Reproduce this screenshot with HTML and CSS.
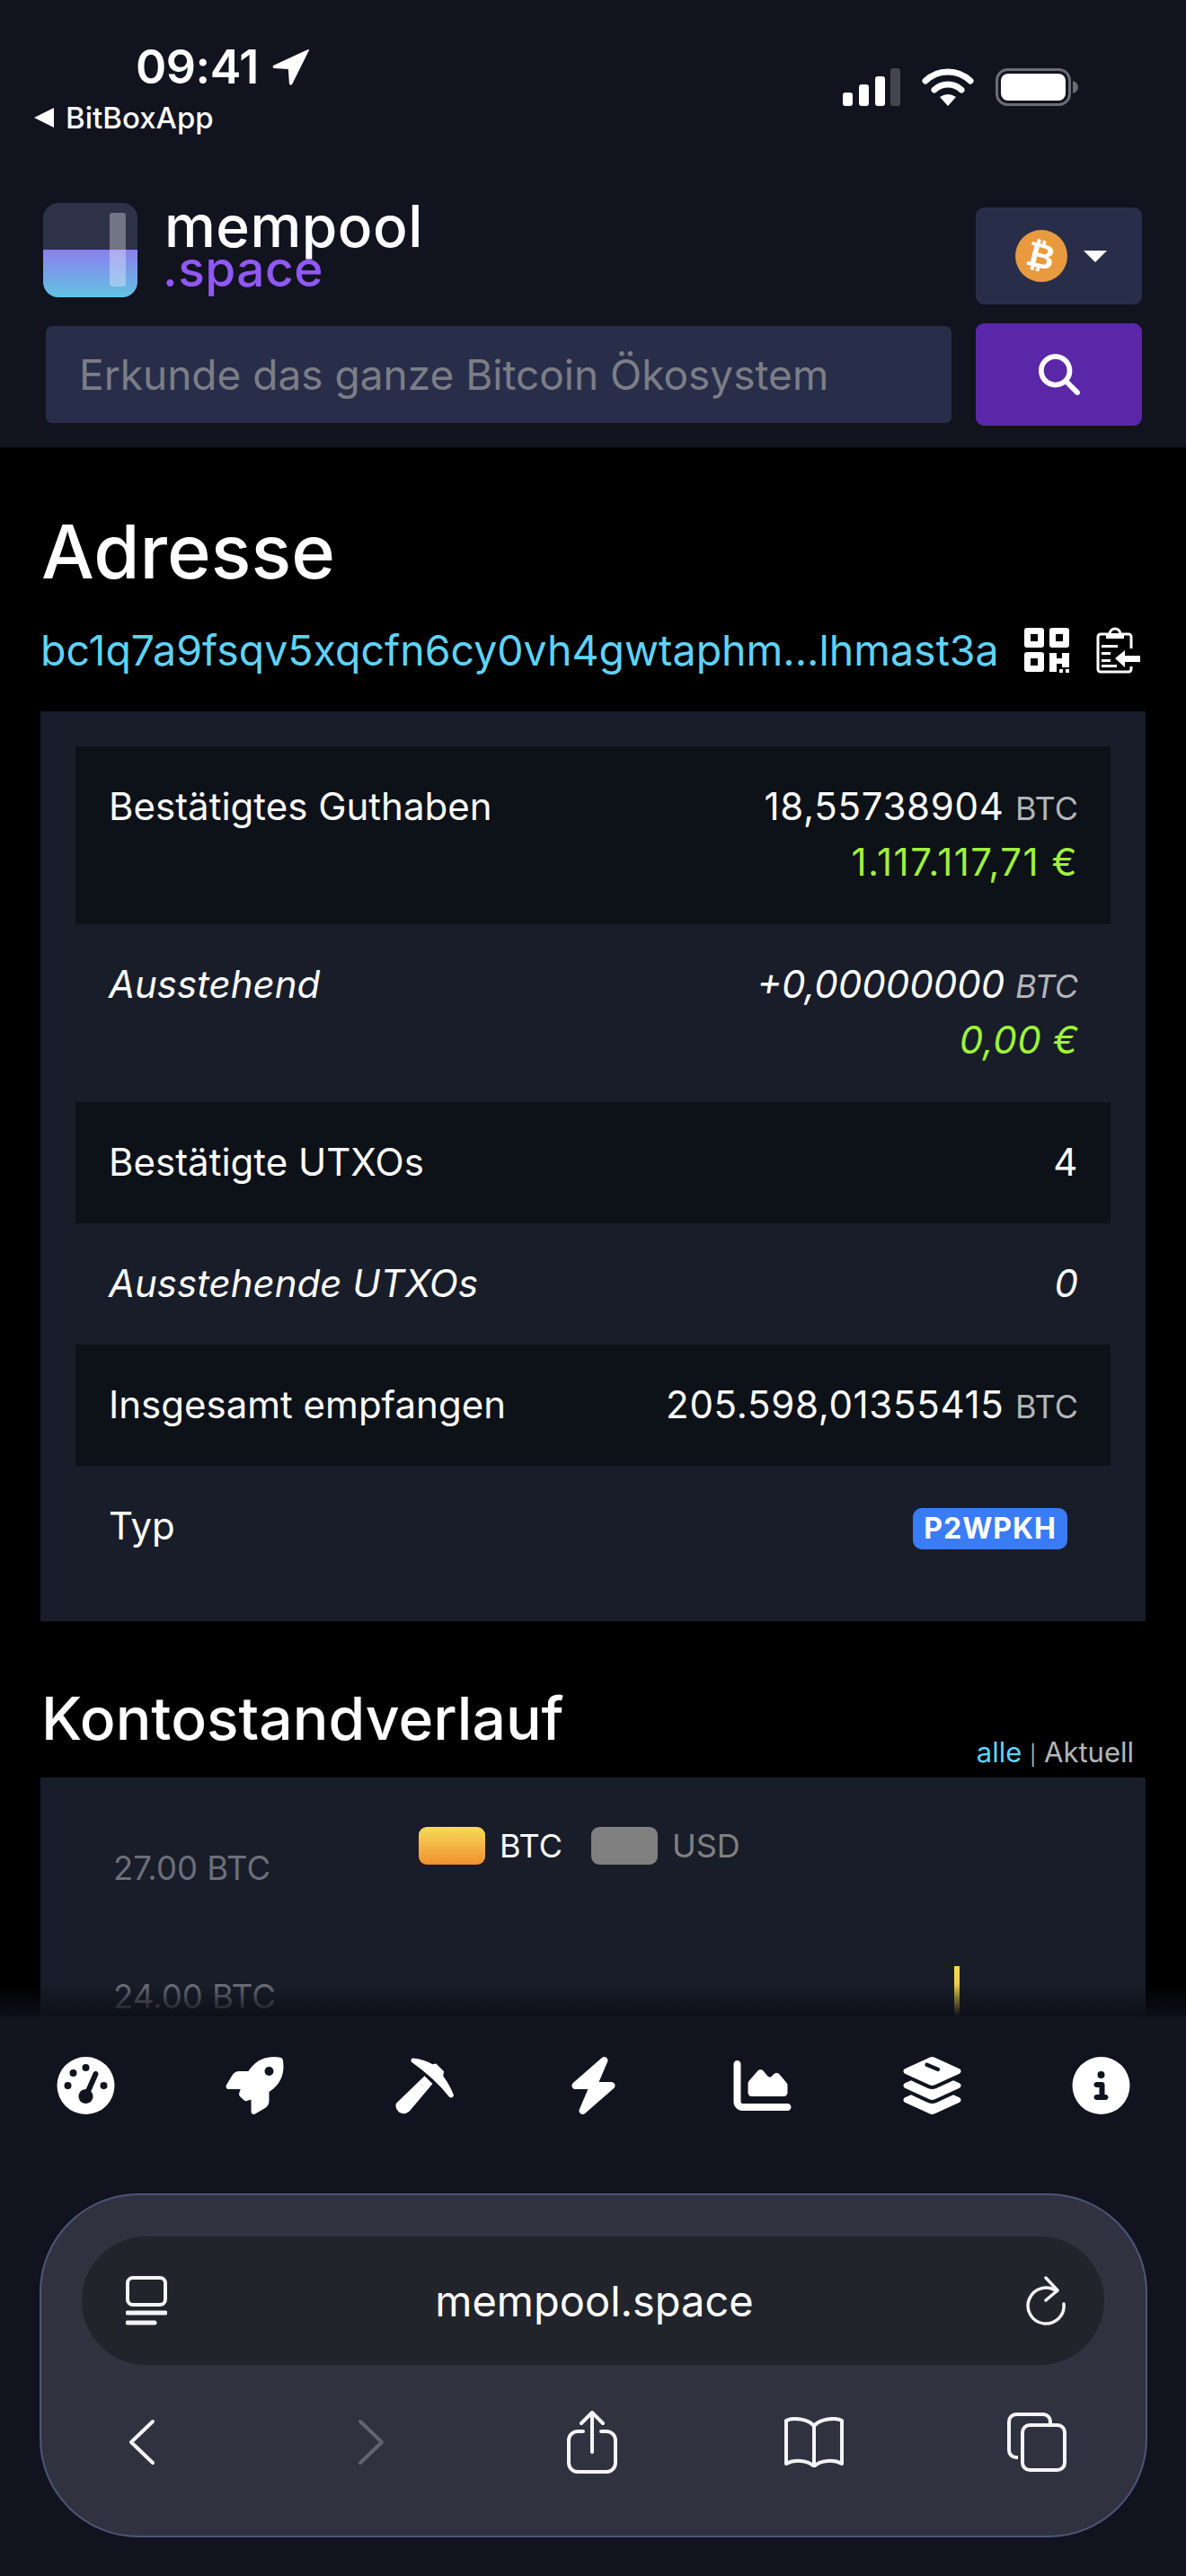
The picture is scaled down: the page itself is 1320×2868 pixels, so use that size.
FILE: index.html
```html
<!DOCTYPE html>
<html lang="de">
  <head>
    <meta charset="UTF-8" />
    <meta name="viewport" content="width=device-width, initial-scale=1.0" />
    <title>mempool.space</title>
    <link rel="stylesheet" href="styles.css">
  </head>

  <body>
    <div class="phone">
      <header class="header">
        <div class="status">
          <div class="status-left">
            <div class="time">
              09:41
              <svg class="arrow" viewBox="0 0 40 40"><path d="M38 1 1 18c-1 1 0 3 1 3l15 1 1 15c0 2 2 2 3 1L39 2c0-1 0-1-1-1z" fill="#fff" /></svg>
            </div>
            <div class="back-app"><span class="back-tri"></span>BitBoxApp</div>
          </div>
          <div class="status-right">
            <svg class="signal" viewBox="0 0 64 42">
              <rect x="0" y="27" width="11" height="15" rx="3" fill="#fff" />
              <rect x="18" y="18" width="11" height="24" rx="3" fill="#fff" />
              <rect x="36" y="9" width="11" height="33" rx="3" fill="#fff" />
              <rect x="53" y="0" width="11" height="42" rx="3" fill="#44464f" />
            </svg>
            <svg class="wifi" viewBox="0 0 58 42">
              <path d="M4 14A36 36 0 0 1 54 14" fill="none" stroke="#fff" stroke-width="7" stroke-linecap="round" />
              <path d="M14 24A22 22 0 0 1 44 24" fill="none" stroke="#fff" stroke-width="7" stroke-linecap="round" />
              <path d="M29 42 20 32Q29 26 38 32Z" fill="#fff" />
            </svg>
            <svg class="battery" viewBox="0 0 92 42">
              <rect x="1.500" y="1.500" width="81" height="39" rx="12" fill="none" stroke="#6a6c76" stroke-width="3" />
              <rect x="6" y="6" width="72" height="30" rx="8" fill="#fff" />
              <path d="M86 14q6 2 6 7t-6 7z" fill="#6a6c76" />
            </svg>
          </div>
        </div>

        <div class="brand-row">
          <div class="brand">
            <div class="logo-mark"><span class="logo-bar"></span></div>
            <div class="logo-text">
              <div class="logo-main">mempool</div>
              <div class="logo-sub">.space</div>
            </div>
          </div>
          <div class="net-btn">
            <span class="btc-coin"><span class="btc-sign">₿</span></span>
            <span class="caret"></span>
          </div>
        </div>

        <div class="search-row">
          <div class="search-input">Erkunde das ganze Bitcoin Ökosystem</div>
          <div class="search-btn">
            <svg viewBox="0 0 512 512"><path d="M416 208c0 45.900-14.900 88.300-40 122.700L502.600 457.400c12.500 12.500 12.500 32.800 0 45.300s-32.800 12.500-45.300 0L330.700 376c-34.400 25.200-76.800 40-122.700 40C93.100 416 0 322.900 0 208S93.100 0 208 0S416 93.100 416 208zM208 352a144 144 0 1 0 0-288 144 144 0 1 0 0 288z" fill="#fff" /></svg>
          </div>
        </div>
      </header>

      <main class="main">
        <h1 class="page-title">Adresse</h1>
        <div class="address-row">
          <span class="address">bc1q7a9fsqv5xqcfn6cy0vh4gwtaphm...lhmast3a</span>
          <svg class="addr-icon qr" viewBox="0 0 50 50">
            <path fill-rule="evenodd" d="M3 0h16q3 0 3 3v16q0 3-3 3H3q-3 0-3-3V3q0-3 3-3zm4 7v8h8V7zM31 0h16q3 0 3 3v16q0 3-3 3H31q-3 0-3-3V3q0-3 3-3zm4 7v8h8V7zM3 27h16q3 0 3 3v16q0 3-3 3H3q-3 0-3-3V30q0-3 3-3zm4 7v8h8v-8z" fill="#fff" />
            <path d="M28 28h8v6h6v-6h8v16h-8v-4h-6v9h-8z" fill="#fff" />
            <rect x="39" y="46" width="4" height="4" fill="#fff" />
            <rect x="46" y="46" width="4" height="4" fill="#fff" />
          </svg>
          <svg class="addr-icon clip" viewBox="0 0 50 52">
            <path d="M39 24V11a3 3 0 0 0-3-3H27a6 6 0 0 0-12 0H5a3 3 0 0 0-3 3v36a3 3 0 0 0 3 3h31a3 3 0 0 0 3-3V44" fill="none" stroke="#fff" stroke-width="3" />
            <path d="M11 7h20v6H11zM6 20h18v3H6zM6 28h10v3H6zM6 36h10v3H6zM6 42h17v3H6z" fill="#fff" />
            <path d="M21 35l11-9v6h17v7H32v6z" fill="#fff" />
          </svg>
        </div>

        <section class="card">
          <div class="row row-dark row-tall">
            <div class="row-label">Bestätigtes Guthaben</div>
            <div class="row-value">
              <div>18,55738904 <span class="unit">BTC</span></div>
              <div class="fiat">1.117.117,71 €</div>
            </div>
          </div>
          <div class="row row-tall row-pending">
            <div class="row-label">Ausstehend</div>
            <div class="row-value">
              <div>+0,00000000 <span class="unit">BTC</span></div>
              <div class="fiat">0,00 €</div>
            </div>
          </div>
          <div class="row row-dark">
            <div class="row-label">Bestätigte UTXOs</div>
            <div class="row-value">4</div>
          </div>
          <div class="row row-pending">
            <div class="row-label">Ausstehende UTXOs</div>
            <div class="row-value">0</div>
          </div>
          <div class="row row-dark">
            <div class="row-label">Insgesamt empfangen</div>
            <div class="row-value">205.598,01355415 <span class="unit">BTC</span></div>
          </div>
          <div class="row">
            <div class="row-label">Typ</div>
            <div class="row-value"><span class="badge">P2WPKH</span></div>
          </div>
        </section>

        <div class="history-head">
          <h2 class="section-title">Kontostandverlauf</h2>
          <div class="range"><span class="range-on">alle</span> <span class="range-sep">|</span> Aktuell</div>
        </div>

        <section class="chart">
          <div class="legend">
            <span class="swatch swatch-btc"></span><span class="legend-on">BTC</span>
            <span class="swatch swatch-usd"></span><span class="legend-off">USD</span>
          </div>
          <div class="axis">
            <div>27.00 BTC</div>
            <div>24.00 BTC</div>
          </div>
          <span class="chart-bar"></span>
        </section>
        <div class="fade"></div>
      </main>

      <nav class="icon-nav">
        <svg class="nav-icon" viewBox="0 0 512 512"><path d="M0 256a256 256 0 1 1 512 0A256 256 0 1 1 0 256zM288 96a32 32 0 1 0 -64 0 32 32 0 1 0 64 0zM256 416c35.300 0 64-28.700 64-64c0-17.400-6.900-33.100-18.100-44.600L366 161.700c5.300-12.100-.2-26.300-12.300-31.600s-26.300 .2-31.600 12.300L257.900 288c-.6 0-1.300 0-1.900 0c-35.300 0-64 28.700-64 64s28.700 64 64 64zM176 144a32 32 0 1 0 -64 0 32 32 0 1 0 64 0zM96 288a32 32 0 1 0 0-64 32 32 0 1 0 0 64zm352-32a32 32 0 1 0 -64 0 32 32 0 1 0 64 0z" /></svg>
        <svg class="nav-icon" viewBox="0 0 512 512"><path d="M156.600 384.900L125.700 354c-8.500-8.500-11.500-20.800-7.700-32.200c3-8.900 7-20.500 11.800-33.800L24 288c-8.600 0-16.600-4.600-20.900-12.100s-4.200-16.700 .2-24.100l52.500-88.500c13-21.900 36.500-35.300 62-35.300l82.300 0c2.400-4 4.800-7.700 7.200-11.300C289.100-4.100 411.100-8.100 483.900 5.300c11.600 2.100 20.600 11.200 22.800 22.800c13.400 72.900 9.300 194.800-111.400 276.700c-3.500 2.400-7.300 4.800-11.300 7.200v82.300c0 25.500-13.400 49-35.300 61.900l-88.500 52.500c-7.400 4.400-16.600 4.500-24.100 .2s-12.100-12.200-12.100-20.900V380.800c-14.100 4.900-26.400 8.900-35.700 11.900c-11.200 3.600-23.400 .5-31.800-7.800zM384 168a40 40 0 1 0 0-80 40 40 0 1 0 0 80z" /></svg>
        <svg class="nav-icon" viewBox="0 0 66 64"><path d="M1 52 33 21l9 9-26 31q-6 5-12 1-5-5-3-10zM20 1q12 1 22 7l4-1 9 9-1 5q8 11 12 22-1 4-5 2Q46 25 18 5q-1-4 2-4z" /></svg>
        <svg class="nav-icon" viewBox="0 0 448 512"><path d="M349.400 44.600c5.900-13.700 1.500-29.700-10.600-38.500s-28.600-8-39.900 1.800l-256 224c-10 8.800-13.600 22.900-8.900 35.300S50.700 288 64 288H175.500L98.600 467.400c-5.900 13.700-1.500 29.700 10.600 38.500s28.600 8 39.900-1.800l256-224c10-8.800 13.600-22.900 8.900-35.300s-18.200-20.800-31.500-20.800H272.500L349.400 44.600z" /></svg>
        <svg class="nav-icon" viewBox="0 0 512 512"><path d="M64 64c0-17.700-14.300-32-32-32S0 46.300 0 64V400c0 44.200 35.800 80 80 80H480c17.700 0 32-14.300 32-32s-14.300-32-32-32H80c-8.800 0-16-7.200-16-16V64zm96 288H448c17.700 0 32-14.300 32-32V251.800c0-7.600-2.700-15-7.700-20.800l-65.800-76.800c-12.100-14.200-33.700-15-46.900-1.800l-21 21c-10 10-26.400 9.200-35.400-1.600l-39.200-47c-12.600-15.100-35.700-15.400-48.700-.6L135.900 215c-5.100 5.800-7.900 13.300-7.900 21.100v84c0 17.700 14.300 32 32 32z" /></svg>
        <svg class="nav-icon" viewBox="32 0 512 512"><path d="M264.500 5.200c14.900-6.900 32.100-6.900 47 0l218.600 101c8.500 3.900 13.900 12.400 13.900 21.800s-5.400 17.900-13.900 21.800l-218.600 101c-14.900 6.900-32.100 6.900-47 0L45.900 149.800C37.400 145.800 32 137.300 32 128s5.400-17.900 13.900-21.800L264.500 5.200zM476.900 209.600l53.200 24.600c8.500 3.900 13.900 12.400 13.900 21.800s-5.400 17.900-13.900 21.800l-218.600 101c-14.900 6.900-32.100 6.900-47 0L45.900 277.800C37.400 273.800 32 265.300 32 256s5.400-17.900 13.900-21.800l53.200-24.600 152 70.200c23.400 10.800 50.400 10.800 73.800 0l152-70.200zm-152 198.200l152-70.200 53.200 24.600c8.500 3.900 13.900 12.400 13.900 21.800s-5.400 17.900-13.900 21.800l-218.600 101c-14.900 6.900-32.100 6.900-47 0L45.900 405.800C37.400 401.800 32 393.300 32 384s5.400-17.900 13.900-21.800l53.200-24.600 152 70.200c23.400 10.800 50.400 10.800 73.800 0z" /><path d="M240 70 340 112" stroke="#11131f" stroke-width="34" stroke-linecap="round" fill="none" /></svg>
        <svg class="nav-icon" viewBox="0 0 512 512"><path d="M256 512A256 256 0 1 0 256 0a256 256 0 1 0 0 512zM216 336h24V272H216c-13.300 0-24-10.700-24-24s10.700-24 24-24h48c13.300 0 24 10.700 24 24v88h8c13.300 0 24 10.700 24 24s-10.700 24-24 24H216c-13.300 0-24-10.700-24-24s10.700-24 24-24zm40-208a32 32 0 1 1 0 64 32 32 0 1 1 0-64z" /></svg>
      </nav>

      <footer class="safari-wrap">
        <div class="safari">
          <div class="url-bar">
            <svg class="url-icon" viewBox="0 0 46 56" fill="none" stroke="#f4f4f6" stroke-width="4">
              <rect x="2" y="2" width="42" height="30" rx="6" />
              <path d="M2 41h42" stroke-width="5" stroke-linecap="round" />
              <path d="M2 52h30" stroke-width="5" stroke-linecap="round" />
            </svg>
            <span class="url-text">mempool.space</span>
            <svg class="url-icon" viewBox="0 0 46 56" fill="none" stroke="#f4f4f6" stroke-width="3.500" stroke-linecap="round" stroke-linejoin="round">
              <path d="M35 17a20 20 0 1 0 8 14" />
              <path d="M23 2l13 14-13 11" />
            </svg>
          </div>
          <div class="tools">
            <svg class="tool tool-nav" viewBox="0 0 32 52" fill="none" stroke="#f4f4f6" stroke-width="4" stroke-linecap="round" stroke-linejoin="round"><path d="M28 3 4 26l24 23" /></svg>
            <svg class="tool tool-nav tool-off" viewBox="0 0 32 52" fill="none" stroke="#62646f" stroke-width="4" stroke-linecap="round" stroke-linejoin="round"><path d="M4 3l24 23L4 49" /></svg>
            <svg class="tool tool-share" viewBox="0 0 56 70" fill="none" stroke="#f4f4f6" stroke-width="4" stroke-linecap="round" stroke-linejoin="round"><path d="M18 23h-6a10 10 0 0 0-10 10v25a10 10 0 0 0 10 10h32a10 10 0 0 0 10-10V33a10 10 0 0 0-10-10h-6" /><path d="M28 46V3M16 14 28 2l12 12" /></svg>
            <svg class="tool tool-book" viewBox="0 0 68 56" fill="none" stroke="#f4f4f6" stroke-width="4" stroke-linejoin="round"><path d="M34 10C28 2 10 0 3 4v48c9-5 24-4 31 3 7-7 22-8 31-3V4c-7-4-25-2-31 6z" /><path d="M34 10v44" /></svg>
            <svg class="tool tool-tabs" viewBox="0 0 66 66" fill="none" stroke="#f4f4f6" stroke-width="4"><path d="M12 50H10a8 8 0 0 1-8-8V10a8 8 0 0 1 8-8h30a8 8 0 0 1 8 8v3" /><rect x="17" y="14" width="47" height="50" rx="8" /></svg>
          </div>
        </div>
      </footer>
    </div>
  </body>
</html>
```

FILE: styles.css
```css
* {
  box-sizing: border-box;
}

body {
  margin: 0;
  background-color: #000;
  color: #fff;
  font-family: 'Inter', 'Liberation Sans', sans-serif;
}

.phone {
  width: 1320px;
  height: 2868px;
  display: flex;
  flex-direction: column;
  overflow: hidden;
}

/* top bar */

.header {
  background-color: #11131f;
  padding: 0 49px 24px 48px;
}

.status {
  height: 226px;
  display: flex;
  justify-content: space-between;
  align-items: flex-start;
}

.status-left {
  padding: 46px 0 0 0;
}

.time {
  display: flex;
  align-items: center;
  gap: 15px;
  margin-left: 103px;
  font-size: 52px;
  font-weight: 600;
  line-height: 58px;
  letter-spacing: -0.5px;
}

.arrow {
  width: 42px;
  height: 42px;
}

.back-app {
  display: flex;
  align-items: center;
  margin: 7px 0 0 -10px;
  font-size: 33px;
  font-weight: 500;
  line-height: 40px;
}

.back-tri {
  width: 0;
  height: 0;
  margin-right: 13px;
  border-top: 11px solid transparent;
  border-bottom: 11px solid transparent;
  border-right: 22px solid #fff;
}

.status-right {
  display: flex;
  align-items: center;
  gap: 24px;
  padding: 76px 71px 0 0;
}

.signal {
  width: 64px;
  height: 42px;
}

.wifi {
  width: 58px;
  height: 42px;
}

.battery {
  width: 92px;
  height: 42px;
}

.brand-row {
  height: 134px;
  display: flex;
  justify-content: space-between;
  align-items: flex-start;
}

.brand {
  display: flex;
  gap: 30px;
}

.logo-mark {
  position: relative;
  width: 105px;
  height: 105px;
  border-radius: 17px;
  overflow: hidden;
  background: linear-gradient(#2e3249 0, #2e3249 50%, #8a80ee 50%, #62c4e2 100%);
}

.logo-bar {
  position: absolute;
  left: 74px;
  top: 11px;
  width: 18px;
  height: 82px;
  border-radius: 3px;
  background-color: rgba(255, 255, 255, 0.33);
}

.logo-text {
  font-size: 64px;
  font-weight: 500;
  line-height: 46px;
  letter-spacing: 0.5px;
}

.logo-main {
  padding-top: 3px;
}

.logo-sub {
  margin: 1px 0 0 -2px;
  color: #9058f5;
  font-size: 55px;
}

.net-btn {
  width: 185px;
  height: 108px;
  margin-top: 5px;
  display: flex;
  align-items: center;
  justify-content: center;
  gap: 18px;
  padding-left: 4px;
  background-color: #282e4a;
  border-radius: 9px;
}

.btc-coin {
  width: 58px;
  height: 58px;
  display: flex;
  align-items: center;
  justify-content: center;
  border-radius: 50%;
  background-color: #e99a3f;
}

.btc-sign {
  font-family: 'DejaVu Sans', sans-serif;
  font-size: 38px;
  font-weight: 700;
  line-height: 1;
  transform: rotate(14deg);
}

.caret {
  width: 0;
  height: 0;
  border-left: 13px solid transparent;
  border-right: 13px solid transparent;
  border-top: 13px solid #fff;
}

.search-row {
  display: flex;
  justify-content: space-between;
  align-items: center;
  height: 114px;
}

.search-input {
  width: 1008px;
  height: 108px;
  margin-left: 3px;
  padding-left: 37px;
  display: flex;
  align-items: center;
  color: #7c7e86;
  background-color: #282e4a;
  border-radius: 7px;
  font-size: 46px;
}

.search-btn {
  width: 185px;
  height: 114px;
  display: flex;
  align-items: center;
  justify-content: center;
  background-color: #5a27a8;
  border-radius: 9px;
}

.search-btn svg {
  width: 46px;
  height: 46px;
}

/* address page */

.main {
  position: relative;
  flex: 1;
  min-height: 0;
  overflow: hidden;
  padding: 0 45px;
}

.page-title {
  margin: 66px 0 0 1px;
  font-size: 83px;
  font-weight: 500;
  line-height: 100px;
}

.address-row {
  display: flex;
  align-items: center;
  height: 60px;
  margin-top: 30px;
}

.address {
  color: #5fd3f8;
  font-size: 46.5px;
  margin-right: 28px;
  white-space: nowrap;
}

.addr-icon {
  flex-shrink: 0;
  width: 50px;
  height: 50px;
}

.clip {
  margin-left: 30px;
  height: 52px;
}

.card {
  margin-top: 38px;
  padding: 39px 39px 38px;
  background-color: #181d29;
}

.row {
  display: flex;
  justify-content: space-between;
  padding: 36px 36px 37px 37px;
  font-size: 42px;
  line-height: 62px;
}

.row-tall {
  padding-bottom: 38px;
}

.row-dark {
  background-color: #0d1118;
}

.row-pending {
  font-style: italic;
}

.row-value {
  text-align: right;
}

.row-dark .row-value {
  letter-spacing: 0.7px;
}

.unit {
  color: #b4b5b9;
  font-size: 36px;
  line-height: 1;
  letter-spacing: 0;
}

.fiat {
  color: #9ff23a;
  letter-spacing: 0.5px;
}

.row-dark .fiat {
  letter-spacing: 1.5px;
}

.badge {
  display: inline-block;
  margin: 11px 12px 0 0;
  padding: 0 12px;
  border-radius: 10px;
  background-color: #3a7bf6;
  font-size: 32px;
  font-weight: 700;
  font-style: normal;
  line-height: 46px;
  letter-spacing: 1px;
  vertical-align: top;
}

.history-head {
  display: flex;
  justify-content: space-between;
  align-items: flex-end;
  margin-top: 64px;
  height: 110px;
}

.section-title {
  margin: 0 0 0 1px;
  font-size: 66px;
  font-weight: 500;
  line-height: 80px;
  padding-bottom: 26px;
}

.range {
  padding: 0 13px 5px 0;
  color: #b4b5b9;
  font-size: 31px;
  line-height: 40px;
}

.range-on {
  color: #5fd3f8;
}

.range-sep {
  font-size: 22px;
}

.chart {
  position: relative;
  height: 400px;
  background-color: #181d29;
}

.legend {
  display: flex;
  align-items: flex-start;
  height: 78px;
  padding: 55px 0 0 421px;
  font-size: 36px;
  line-height: 42px;
}

.swatch {
  flex-shrink: 0;
  width: 74px;
  height: 42px;
  border-radius: 9px;
  margin-right: 16px;
}

.swatch-btc {
  background: linear-gradient(#f8da58, #ee9230);
}

.swatch-usd {
  margin-left: 32px;
  background-color: #808080;
}

.legend-off {
  color: #808080;
}

.axis {
  display: flex;
  flex-direction: column;
  gap: 100px;
  padding: 2px 0 0 81px;
  color: #6c6f7a;
  font-size: 36.5px;
  line-height: 43px;
}

.chart-bar {
  position: absolute;
  left: 1017px;
  top: 210px;
  width: 6px;
  height: 100px;
  background: linear-gradient(#fbdc4f, #b08a38);
}

.fade {
  position: absolute;
  left: 0;
  right: 0;
  bottom: 0;
  height: 36px;
  background: linear-gradient(rgba(13, 15, 24, 0), #0d0f18);
}

/* bottom icon row */

.icon-nav {
  height: 197px;
  padding: 45px 62px 0 63px;
  display: flex;
  justify-content: space-between;
  align-items: flex-start;
  background-color: #11131f;
}

.nav-icon {
  width: 65px;
  height: 64px;
  fill: #fff;
}

/* browser bar */

.safari-wrap {
  height: 426px;
  padding: 0 43px 0 44px;
  background-color: #11131f;
}

.safari {
  height: 383px;
  padding: 46px 46px 0 45px;
  background-color: #30323f;
  border: 2px solid #4f5579;
  border-radius: 110px;
}

.url-bar {
  height: 143px;
  padding: 0 42px 0 49px;
  display: flex;
  align-items: center;
  justify-content: space-between;
  background-color: #22242c;
  border-radius: 72px;
}

.url-icon {
  width: 46px;
  height: 56px;
}

.url-text {
  margin-right: 4px;
  font-size: 47px;
  line-height: 60px;
}

.tools {
  display: flex;
  align-items: center;
  margin-top: 51px;
  padding-left: 51px;
}

.tool-nav {
  width: 32px;
  height: 52px;
}

.tool-off {
  margin-left: 223px;
}

.tool-share {
  width: 56px;
  height: 70px;
  margin-left: 202px;
}

.tool-book {
  width: 68px;
  height: 56px;
  margin-left: 185px;
}

.tool-tabs {
  width: 66px;
  height: 66px;
  margin-left: 181px;
}
```
